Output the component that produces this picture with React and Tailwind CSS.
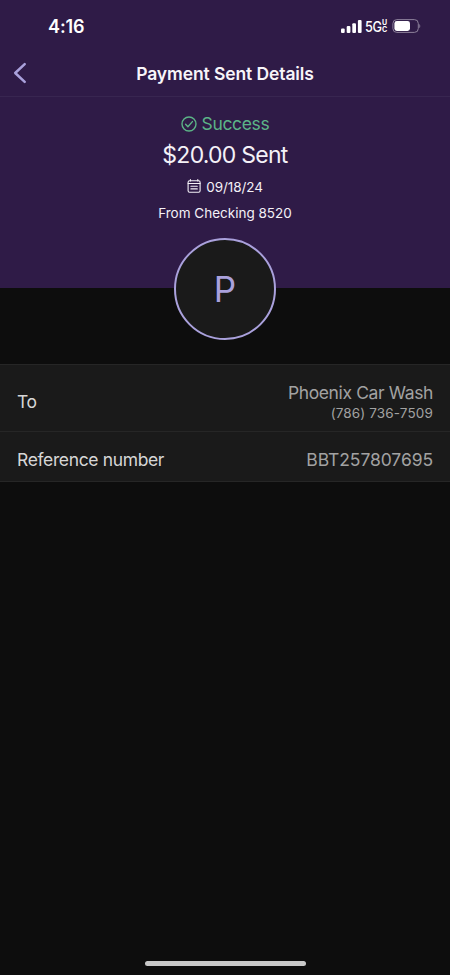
import React from 'react';

const payment = {
  amount: '$20.00',
  date: '09/18/24',
  account: 'From Checking 8520',
  recipient: 'Phoenix Car Wash',
  phone: '(786) 736-7509',
  reference: 'BBT257807695',
};

function StatusBar() {
  return (
    <div className="h-[51px] pt-px pl-12 pr-[29px] flex items-center justify-between text-white">
      <span className="pt-0.5 text-[18px] leading-none font-semibold tracking-[-0.1px]">4:16</span>

      <div className="flex items-center">
        {/* Cell signal */}
        <svg className="w-[21px] h-[13px]" viewBox="0 0 21 13" fill="currentColor">
          <rect x="0" y="8.5" width="3.7" height="4.5" rx="1.1" />
          <rect x="5.7" y="5.9" width="3.7" height="7.1" rx="1.1" />
          <rect x="11.3" y="3.2" width="3.7" height="9.8" rx="1.1" />
          <rect x="16.9" y="0" width="3.7" height="13" rx="1.1" />
        </svg>

        <span className="ml-[3px] mt-0.5 w-[17px] origin-left scale-x-[0.88] text-[14.5px] leading-none font-medium tracking-[-0.5px]">5G</span>
        <span className="w-[7px] flex flex-col text-[7px] leading-[7px] font-bold">
          <span>U</span>
          <span>C</span>
        </span>

        {/* Battery */}
        <svg className="ml-[3px] w-[29px] h-[14px]" viewBox="0 0 29 14">
          <rect x="0.9" y="0.6" width="25.4" height="12.8" rx="3.9" fill="none" stroke="#8d819b" />
          <rect x="2.4" y="2.1" width="15.6" height="9.8" rx="2.4" fill="#fff" />
          <path d="M27.3 4.9c1.3.5 1.3 3.7 0 4.2z" fill="#8d819b" />
        </svg>
      </div>
    </div>
  );
}

function Header() {
  return (
    <header className="h-[46px] px-3 pb-px grid grid-cols-[40px_1fr_40px] items-center border-b border-[#382650]">
      <button className="text-[#aaa1dc]" aria-label="Back">
        <svg className="w-4 h-[22px]" viewBox="0 0 16 22" fill="none" stroke="currentColor" strokeWidth="2.5" strokeLinecap="round" strokeLinejoin="round">
          <path d="M12.7 2.2 3.2 11l9.5 8.9" />
        </svg>
      </button>
      <h1 className="pt-px text-center text-[17.5px] leading-none font-semibold tracking-[-0.1px] text-[#f7f5f9] whitespace-nowrap">
        Payment Sent Details
      </h1>
    </header>
  );
}

function Summary() {
  return (
    <section className="h-[191px] pt-4 flex flex-col items-center text-[#f4f1f7]">
      <div className="h-[22px] shrink-0 flex items-center gap-[5px] text-[#5cb487]">
        <svg className="w-4 h-4" viewBox="0 0 16 16" fill="none" stroke="currentColor" strokeWidth="1.4" strokeLinecap="round" strokeLinejoin="round">
          <circle cx="8" cy="8" r="7" />
          <path d="m4.6 8.3 2.3 2.4 4.5-5.1" />
        </svg>
        <span className="text-[17.5px] leading-none tracking-[-0.35px]">Success</span>
      </div>

      <div className="h-10 shrink-0 flex items-center text-[23px] leading-none tracking-[-0.75px]">{payment.amount} Sent</div>

      <div className="h-6 shrink-0 flex items-center gap-[5px]">
        <svg className="mb-0.5 w-3.5 h-3.5" viewBox="0 0 14 14" fill="none" stroke="currentColor" strokeWidth="1.1" strokeLinecap="round">
          <rect x="1.1" y="1.7" width="12" height="11.6" rx="1.5" />
          <path d="M3.4.6v1.3M10.8.6v1.3M1.1 4.5h12M3.9 7.2h6.4M3.9 9.9h6.4" />
        </svg>
        <span className="pt-0.5 text-[13.5px] leading-none tracking-[-0.08px]">{payment.date}</span>
      </div>

      <div className="h-7 pt-0.5 shrink-0 flex items-center text-[13.5px] leading-none">{payment.account}</div>

      {/* Recipient initial, half of it hangs below the purple area */}
      <div className="mt-[11px] w-[102px] h-[102px] shrink-0 rounded-full border-2 border-[#aaa1dc] bg-[#1a1a1a] text-[#aaa1dc] flex items-center justify-center text-[35px] leading-none">
        P
      </div>
    </section>
  );
}

function Details() {
  return (
    <dl className="mt-[76px] bg-[#1a1a1a] border-y border-[#262626] text-[17.5px] leading-none">
      <div className="h-[67px] px-[17px] flex items-center justify-between border-b border-[#262626]">
        <dt className="pt-2 tracking-[-0.5px] text-[#d6d6d6]">To</dt>
        <dd className="pt-2.5 text-right text-[#a2a2a2]">
          <div className="h-5 tracking-[-0.38px]">{payment.recipient}</div>
          <div className="text-[13.5px] leading-[18px] tracking-[0.13px]">{payment.phone}</div>
        </dd>
      </div>
      <div className="h-[49px] pt-[7px] px-[17px] flex items-center justify-between">
        <dt className="tracking-[-0.36px] text-[#d6d6d6]">Reference number</dt>
        <dd className="tracking-[-0.08px] text-[#a2a2a2]">{payment.reference}</dd>
      </div>
    </dl>
  );
}

export default function App() {
  return (
    <div className="w-full h-[975px] flex flex-col overflow-hidden bg-[#0d0d0d] font-['Inter','Liberation_Sans',sans-serif]">
      <div className="bg-[#2f1b47] shrink-0">
        <StatusBar />
        <Header />
        <Summary />
      </div>
      <Details />

      {/* Home indicator */}
      <div className="mt-auto mb-[9px] mx-auto w-[161px] h-[5px] rounded-full bg-[#c8c8c8]" />
    </div>
  );
}
